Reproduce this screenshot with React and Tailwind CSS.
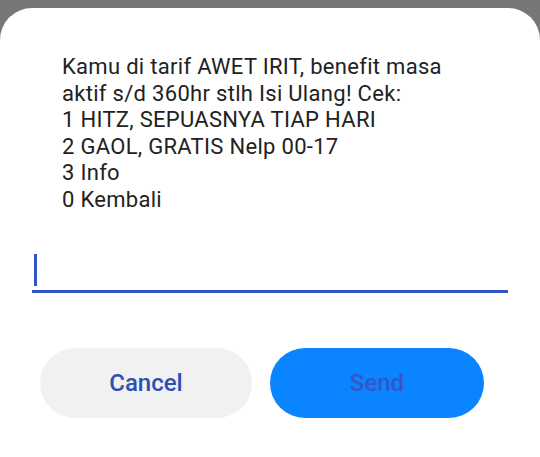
import React from 'react';

const lines = [
  'Kamu di tarif AWET IRIT, benefit masa',
  'aktif s/d 360hr stlh Isi Ulang! Cek:',
  '1 HITZ, SEPUASNYA TIAP HARI',
  '2 GAOL, GRATIS Nelp 00-17',
  '3 Info',
  '0 Kembali',
];

export default function App() {
  return (
    <div className="w-[540px] h-[457px] bg-[#777777] pt-2 overflow-hidden" style={{ fontFamily: 'Roboto, "Noto Sans", sans-serif' }}>
      <div className="bg-white rounded-t-[32px] h-full flex flex-col">
        {/* USSD message */}
        <div className="pl-[62px] pt-[46px] text-[22px] leading-[26.6px] tracking-[0.3px] text-[#222222]">
          {lines.map((l) => (
            <div key={l}>{l}</div>
          ))}
        </div>

        {/* Input */}
        <div className="mx-[32px] mt-[40px] h-[39px] border-b-[3px] border-[#2f55c4] flex items-end pb-[4px]">
          <div className="w-[3px] h-[32px] bg-[#2f55c4] ml-[2px]" />
        </div>

        {/* Buttons */}
        <div className="flex pl-[40px] mt-[55px] gap-[18px]">
          <button className="w-[212px] h-[70px] rounded-full bg-[#f1f1f1] text-[#2b4fb6] text-[24px] font-medium">
            Cancel
          </button>
          <button className="w-[214px] h-[70px] rounded-full bg-[#0a84ff] text-[#3656c9] text-[24px] font-medium">
            Send
          </button>
        </div>
      </div>
    </div>
  );
}
